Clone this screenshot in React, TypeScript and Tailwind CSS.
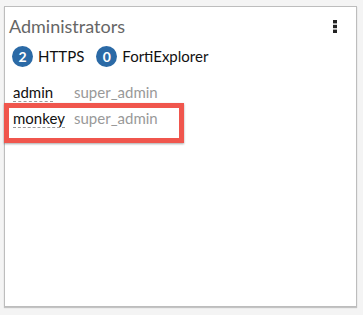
import React from 'react';

const admins = [
  { name: 'admin', profile: 'super_admin', highlight: false },
  { name: 'monkey', profile: 'super_admin', highlight: true },
];

function Badge({ count, label }: { count: number; label: string }) {
  return (
    <div className="flex items-center gap-[5px]">
      <span className="flex h-[21px] w-[21px] items-center justify-center rounded-full bg-[#2b6aa6] text-[14px] font-bold text-white">
        {count}
      </span>
      <span className="text-[15px] text-[#111]">{label}</span>
    </div>
  );
}

export default function App() {
  return (
    <div className="h-[315px] w-[363px] bg-[#f4f4f4] pl-[4px] pr-[6px] pt-[6px] pb-[8px] font-['Lato',_'Liberation_Sans',_sans-serif]">
      <div className="flex h-full flex-col border border-[#bdbdbd] bg-white shadow-[0_1px_1px_rgba(0,0,0,0.2)]">
        {/* Header */}
        <div className="flex items-center justify-between pl-[4px] pr-[19px] pt-[6px]">
          <h2 className="text-[18px] leading-[26px] text-[#666]">Administrators</h2>
          <svg width="4" height="13" viewBox="0 0 4 13" className="text-[#222]">
            <rect x="0" y="0" width="4" height="3.4" fill="currentColor" />
            <rect x="0" y="4.8" width="4" height="3.4" fill="currentColor" />
            <rect x="0" y="9.6" width="4" height="3.4" fill="currentColor" />
          </svg>
        </div>

        {/* Session counts */}
        <div className="mt-[6px] flex items-center gap-[12px] pl-[7px]">
          <Badge count={2} label="HTTPS" />
          <Badge count={0} label="FortiExplorer" />
        </div>

        {/* Admin list */}
        <div className="mt-[15px] flex flex-col gap-[1px] pl-[8px] text-[15px] leading-[18px]">
          {admins.map((a) => (
            <div
              key={a.name}
              className={
                a.highlight
                  ? '-ml-[9px] flex w-[180px] items-start border-[5px] border-[#f0564d] pl-[4px] pt-[1px] pb-[10px] shadow-[0_1px_2px_rgba(0,0,0,0.35)]'
                  : 'flex items-start'
              }
            >
              <div className="flex w-[61px]">
                <span className="border-b border-dashed border-[#999] text-[#111]">{a.name}</span>
              </div>
              <span className="text-[#999]">{a.profile}</span>
            </div>
          ))}
        </div>
      </div>
    </div>
  );
}
